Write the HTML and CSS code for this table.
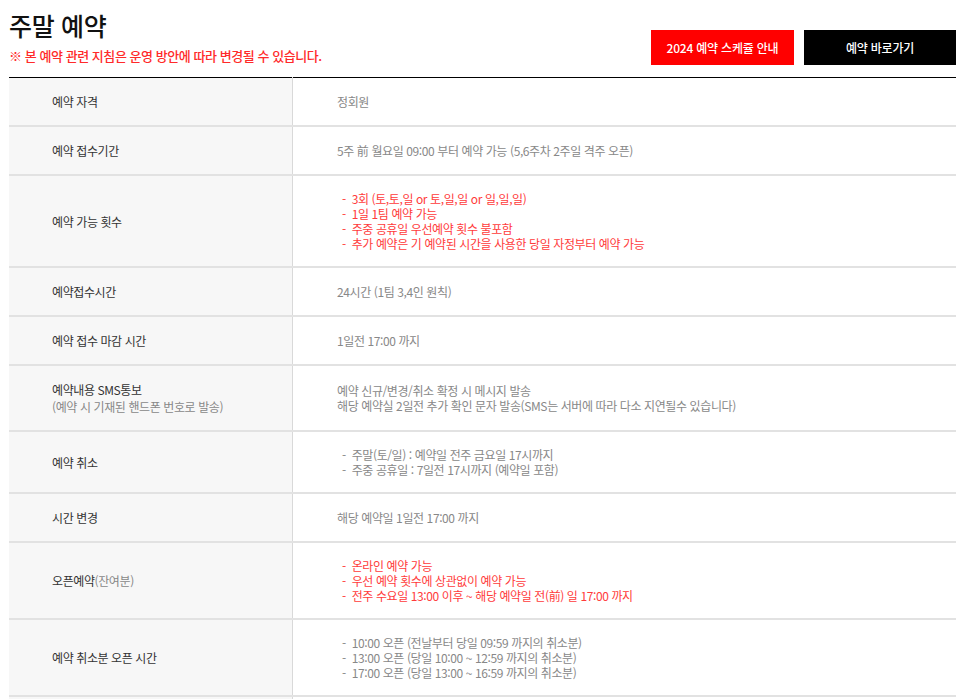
FILE: index.html
```html
<!DOCTYPE html>
<html lang="ko">
<head>
<meta charset="utf-8">
<title>주말 예약</title>
<link rel="stylesheet" href="styles.css">
</head>
<body>
<div class="wrap">
  <div class="head">
    <div class="head-left">
      <h1 class="title">주말 예약</h1>
      <p class="note">※ 본 예약 관련 지침은 운영 방안에 따라 변경될 수 있습니다.</p>
    </div>
    <div class="btns">
      <a class="btn btn-red">2024 예약 스케쥴 안내</a>
      <a class="btn btn-black">예약 바로가기</a>
    </div>
  </div>
  <table class="info">
    <tr><th>예약 자격</th><td>정회원</td></tr>
    <tr><th>예약 접수기간</th><td>5주 前 월요일 09:00 부터 예약 가능 (5,6주차 2주일 격주 오픈)</td></tr>
    <tr><th>예약 가능 횟수</th><td class="red">
      <div class="li">-&nbsp; 3회 (토,토,일 or 토,일,일 or 일,일,일)</div>
      <div class="li">-&nbsp; 1일 1팀 예약 가능</div>
      <div class="li">-&nbsp; 주중 공휴일 우선예약 횟수 불포함</div>
      <div class="li">-&nbsp; 추가 예약은 기 예약된 시간을 사용한 당일 자정부터 예약 가능</div>
    </td></tr>
    <tr><th>예약접수시간</th><td>24시간 (1팀 3,4인 원칙)</td></tr>
    <tr><th>예약 접수 마감 시간</th><td>1일전 17:00 까지</td></tr>
    <tr><th>예약내용 SMS통보<br><span class="sub">(예약 시 기재된 핸드폰 번호로 발송)</span></th><td>
      <div>예약 신규/변경/취소 확정 시 메시지 발송</div>
      <div>해당 예약실 2일전 추가 확인 문자 발송(SMS는 서버에 따라 다소 지연될수 있습니다)</div>
    </td></tr>
    <tr><th>예약 취소</th><td>
      <div class="li">-&nbsp; 주말(토/일) : 예약일 전주 금요일 17시까지</div>
      <div class="li">-&nbsp; 주중 공휴일 : 7일전 17시까지 (예약일 포함)</div>
    </td></tr>
    <tr><th>시간 변경</th><td>해당 예약일 1일전 17:00 까지</td></tr>
    <tr><th>오픈예약<span class="sub">(잔여분)</span></th><td class="red">
      <div class="li">-&nbsp; 온라인 예약 가능</div>
      <div class="li">-&nbsp; 우선 예약 횟수에 상관없이 예약 가능</div>
      <div class="li">-&nbsp; 전주 수요일 13:00 이후 ~ 해당 예약일 전(前) 일 17:00 까지</div>
    </td></tr>
    <tr><th>예약 취소분 오픈 시간</th><td>
      <div class="li">-&nbsp; 10:00 오픈 (전날부터 당일 09:59 까지의 취소분)</div>
      <div class="li">-&nbsp; 13:00 오픈 (당일 10:00 ~ 12:59 까지의 취소분)</div>
      <div class="li">-&nbsp; 17:00 오픈 (당일 13:00 ~ 16:59 까지의 취소분)</div>
    </td></tr>
    <tr><th>&nbsp;</th><td>&nbsp;</td></tr>
  </table>
</div>
</body>
</html>
```
FILE: styles.css
```css
html, body {
  margin: 0;
  padding: 0;
  background: #fff;
}
body {
  font-family: "Noto Sans CJK KR", "Noto Sans", sans-serif;
  color: #333;
}
.wrap {
  width: 947px;
  margin-left: 9px;
}
.head {
  display: flex;
  justify-content: space-between;
  align-items: flex-end;
  padding-top: 9px;
  margin-bottom: 12px;
}
.title {
  margin: 0;
  font-size: 25px;
  line-height: 32px;
  font-weight: 500;
  color: #111;
  letter-spacing: -0.3px;
}
.note {
  margin: 6px 0 0;
  font-size: 13px;
  line-height: 18px;
  color: #ff2a2a;
  font-weight: 500;
  letter-spacing: -0.45px;
}
.btns {
  display: flex;
  gap: 10px;
}
.btn {
  display: flex;
  align-items: center;
  justify-content: center;
  height: 35px;
  color: #fff;
  font-size: 12px;
  font-weight: 500;
  text-decoration: none;
  letter-spacing: -0.2px;
}
.btn-red {
  width: 143px;
  background: #ff0000;
}
.btn-black {
  width: 152px;
  background: #000;
}
.info {
  width: 100%;
  border-collapse: collapse;
  border-top: 1px solid #000;
  font-size: 12px;
  line-height: 15px;
  letter-spacing: -0.4px;
}
.info th, .info td {
  border-bottom: 2px solid #e2e2e2;
  padding: 15px 0 15px 43px;
  text-align: left;
  vertical-align: middle;
}
.info th {
  width: 240px;
  background: #f7f7f7;
  font-weight: 400;
  color: #333;
  line-height: 17px;
  border-right: 1px solid #d9d9d9;
}
.info td {
  padding-left: 44px;
  color: #888;
}
.info td.red {
  color: #ff3b3b;
}
.li {
  padding-left: 5px;
}
.sub {
  color: #888;
}
```
